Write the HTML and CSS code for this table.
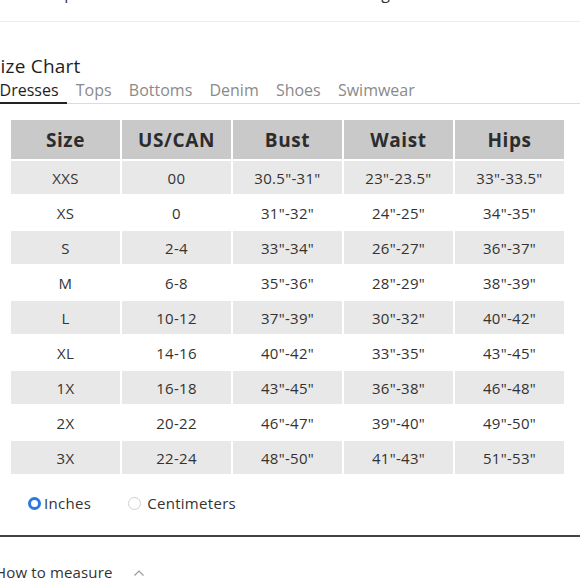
FILE: index.html
```html
<!DOCTYPE html>
<html lang="en">
<head>
<meta charset="utf-8">
<link rel="stylesheet" href="styles.css">
</head>
<body>
<div class="top-strip">
  <div class="top-text"><span class="t1">Shop</span><span class="t2">Sizing</span></div>
</div>
<section class="chart">
  <h2 class="title">Size Chart</h2>
  <div class="tabs">
    <span class="tab active">Dresses</span>
    <span class="tab">Tops</span>
    <span class="tab">Bottoms</span>
    <span class="tab">Denim</span>
    <span class="tab">Shoes</span>
    <span class="tab">Swimwear</span>
  </div>
  <table class="sizes">
    <thead>
      <tr><th>Size</th><th>US/CAN</th><th>Bust</th><th>Waist</th><th>Hips</th></tr>
    </thead>
    <tbody>
      <tr><td>XXS</td><td>00</td><td>30.5"-31"</td><td>23"-23.5"</td><td>33"-33.5"</td></tr>
      <tr><td>XS</td><td>0</td><td>31"-32"</td><td>24"-25"</td><td>34"-35"</td></tr>
      <tr><td>S</td><td>2-4</td><td>33"-34"</td><td>26"-27"</td><td>36"-37"</td></tr>
      <tr><td>M</td><td>6-8</td><td>35"-36"</td><td>28"-29"</td><td>38"-39"</td></tr>
      <tr><td>L</td><td>10-12</td><td>37"-39"</td><td>30"-32"</td><td>40"-42"</td></tr>
      <tr><td>XL</td><td>14-16</td><td>40"-42"</td><td>33"-35"</td><td>43"-45"</td></tr>
      <tr><td>1X</td><td>16-18</td><td>43"-45"</td><td>36"-38"</td><td>46"-48"</td></tr>
      <tr><td>2X</td><td>20-22</td><td>46"-47"</td><td>39"-40"</td><td>49"-50"</td></tr>
      <tr><td>3X</td><td>22-24</td><td>48"-50"</td><td>41"-43"</td><td>51"-53"</td></tr>
    </tbody>
  </table>
  <div class="units">
    <label class="unit"><span class="radio on"></span>Inches</label>
    <label class="unit"><span class="radio"></span>Centimeters</label>
  </div>
</section>
<div class="measure">
  <span class="measure-label">How to measure</span>
  <svg class="chev" width="12" height="8" viewBox="0 0 12 8"><path d="M1.5 6.5 L6 2 L10.5 6.5" fill="none" stroke="#9a9a9a" stroke-width="1.2"/></svg>
</div>
</body>
</html>
```

FILE: styles.css
```css
html, body {
  margin: 0;
  padding: 0;
  background: #fff;
}
body {
  font-family: "Open Sans", "Liberation Sans", sans-serif;
  color: #2a2a2a;
  width: 580px;
  overflow: hidden;
}
.top-strip {
  height: 21px;
  border-bottom: 1px solid #ececec;
  overflow: hidden;
}
.top-text {
  margin-top: -16px;
  font-size: 16px;
  line-height: 18px;
  color: #333;
  display: flex;
}
.t1 { margin-left: 36px; }
.t2 { margin-left: 273px; }
.chart {
  margin-left: -4px;
  padding-top: 34px;
}
.title {
  margin: 0 0 0 -6px;
  font-size: 19px;
  letter-spacing: 0.2px;
  font-weight: 400;
  line-height: 20px;
  color: #1e1e1e;
}
.tabs {
  display: flex;
  margin-top: 5px;
  margin-left: -5px;
  border-bottom: 1px solid #dcdcdc;
  font-size: 16px;
  line-height: 19px;
}
.tab {
  color: #8a8a8a;
  padding: 0 8.6px 2px;
}
.tab.active {
  color: #1e1e1e;
  border-bottom: 2px solid #222;
  margin-bottom: -1px;
}
.sizes {
  margin-top: 14px;
  margin-left: 13px;
  width: 557px;
  border-collapse: separate;
  border-spacing: 2px;
  table-layout: fixed;
  color: #333;
}
.sizes th {
  background: #c9c9c9;
  font-size: 19px;
  font-weight: 700;
  letter-spacing: 0.6px;
  height: 39px;
  padding: 0;
  color: #2c2c2c;
}
.sizes td {
  font-size: 15px;
  letter-spacing: 0.3px;
  text-align: center;
  height: 33px;
  padding: 0;
}
.sizes tbody tr:nth-child(odd) td {
  background: #e8e8e8;
}
.units {
  display: flex;
  gap: 37px;
  margin-left: 32px;
  margin-top: 18px;
  font-size: 15px;
  letter-spacing: 0.3px;
  line-height: 18px;
  color: #333;
}
.unit {
  display: flex;
  align-items: center;
}
.radio {
  width: 13px;
  height: 13px;
  border-radius: 50%;
  border: 1px solid #cfcfcf;
  box-sizing: border-box;
  margin-right: 6px;
  background: #fff;
}
.radio.on {
  border: 3.5px solid #2a78e0;
  background: #fff;
  margin-right: 3px;
}
.measure {
  margin-top: 23px;
  border-top: 2px solid #444;
  padding-top: 26px;
  margin-left: -5px;
  display: flex;
  align-items: center;
  gap: 20px;
  font-size: 15px;
  letter-spacing: 0.15px;
  line-height: 18px;
  color: #333;
}
.chev { margin-top: 2px; }
```
